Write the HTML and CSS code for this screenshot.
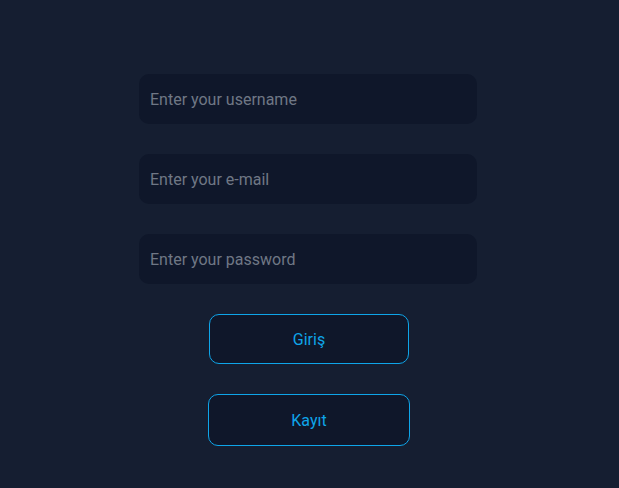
FILE: index.html
```html
<!DOCTYPE html>
<html>
<head>
<meta charset="utf-8">
<link rel="stylesheet" href="styles.css">
</head>
<body>
<form class="form">
  <input class="field" type="text" placeholder="Enter your username">
  <input class="field" type="email" placeholder="Enter your e-mail">
  <input class="field" type="password" placeholder="Enter your password">
  <button class="btn" type="button">Giriş</button>
  <button class="btn btn-wide" type="button">Kayıt</button>
</form>
</body>
</html>
```

FILE: styles.css
```css
html, body {
  margin: 0;
  padding: 0;
  background: #151e31;
  height: 100%;
}
body {
  font-family: Roboto, "Noto Sans", sans-serif;
}
.form {
  display: flex;
  flex-direction: column;
  align-items: center;
  padding-top: 74px;
  gap: 30px;
  width: 616px;
}
.field {
  box-sizing: border-box;
  width: 338px;
  height: 50px;
  border: none;
  border-radius: 10px;
  background: #0f172a;
  padding: 0 11px;
  font-family: inherit;
  font-size: 16px;
  color: #d1d5db;
  outline: none;
}
.field::placeholder {
  color: #6f7785;
}
.btn {
  box-sizing: border-box;
  width: 200px;
  height: 50px;
  margin-left: 2px;
  border: 1px solid #0ea5e9;
  border-radius: 10px;
  background: #0f172a;
  color: #0ea5e9;
  font-family: inherit;
  font-size: 16px;
  font-weight: 400;
  cursor: pointer;
}
.btn-wide {
  width: 202px;
  height: 52px;
}
```
